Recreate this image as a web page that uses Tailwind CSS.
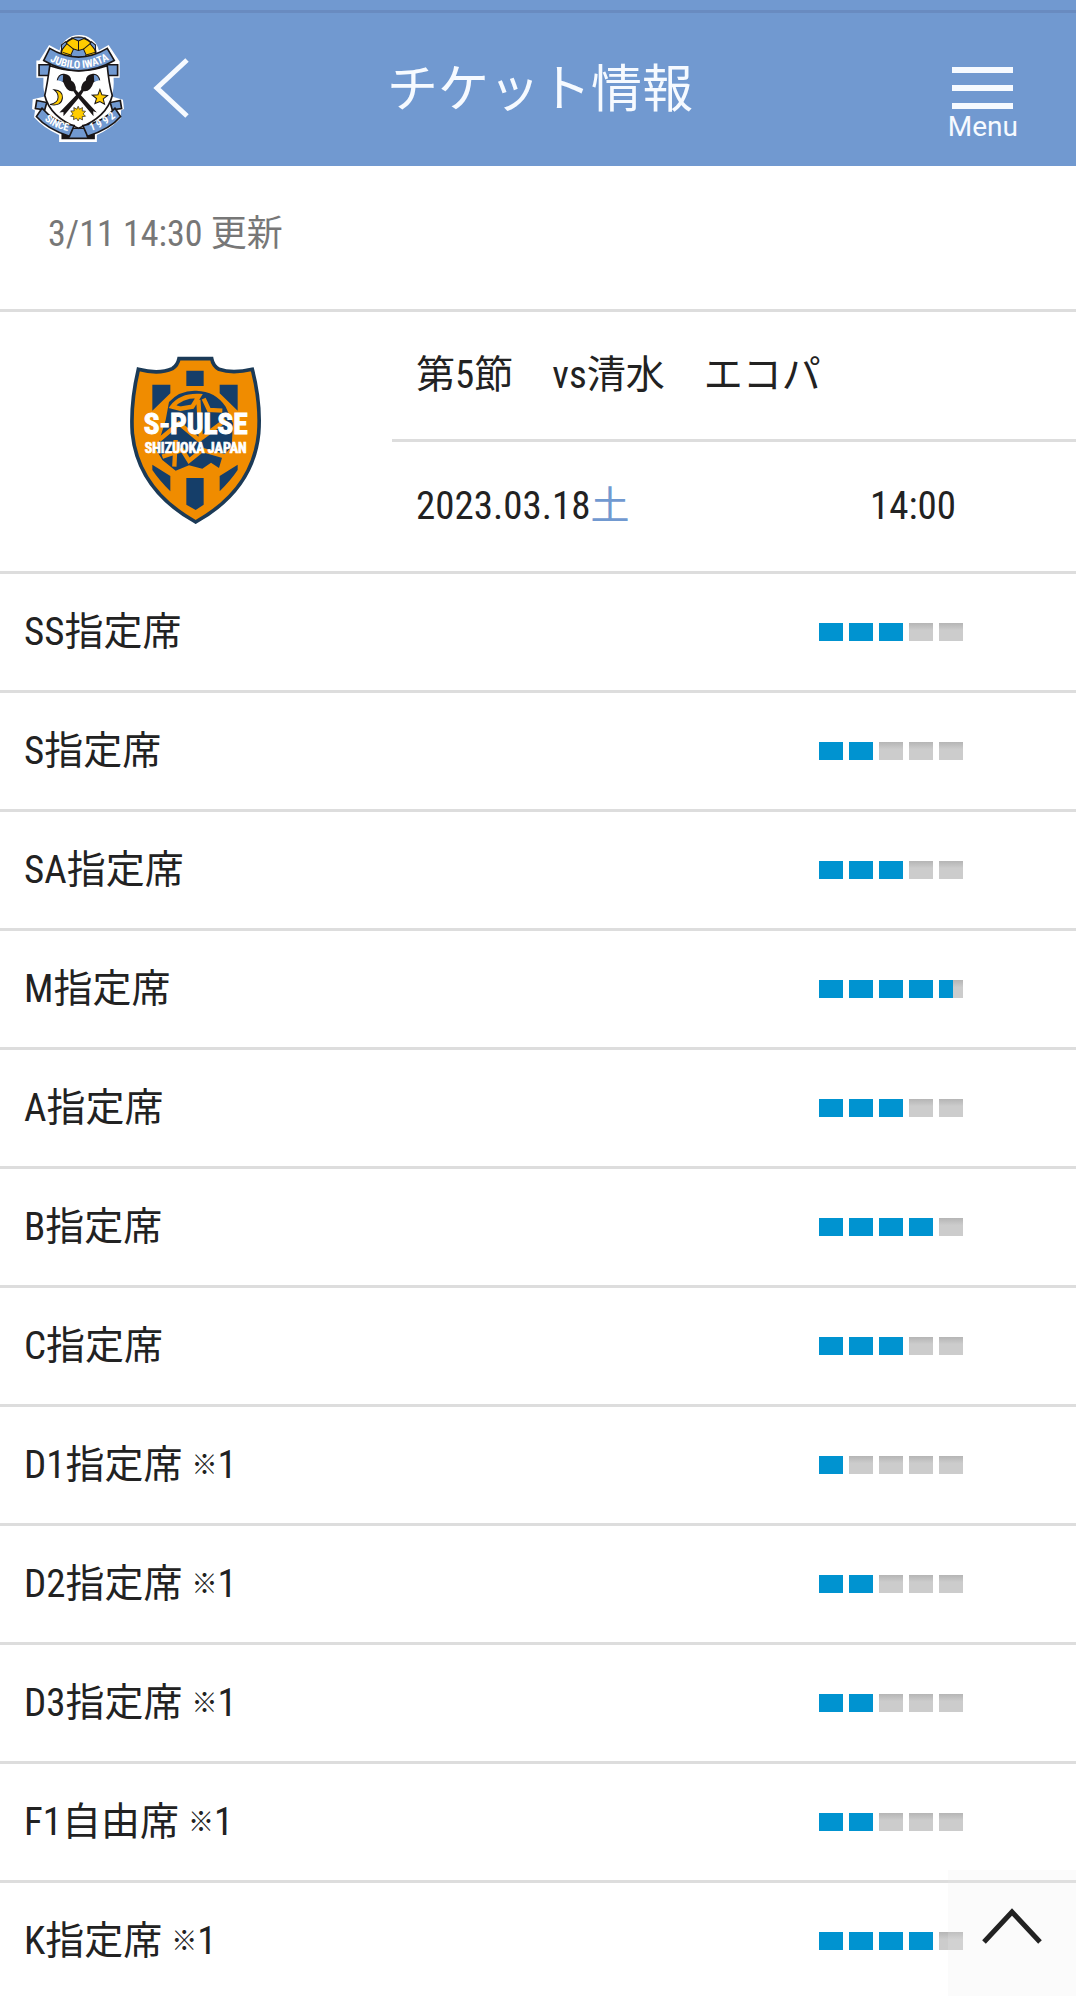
<!DOCTYPE html>
<html lang="ja">
<head>
    <meta charset="UTF-8">
    <meta name="viewport" content="width=device-width, initial-scale=1.0">
    <title>チケット情報</title>
    <script src="https://cdn.jsdelivr.net/npm/@tailwindcss/browser@4"></script>
</head>
<body class="bg-white font-['Roboto_Condensed','Noto_Sans_CJK_JP',sans-serif] text-[39px] text-[#222]">
    <header class="border-t-[10px] border-[#7199d0] bg-[#7199d0] text-[#f6faff]">
        <div class="flex h-[156px] items-center justify-between border-t-[3px] border-[#698bc0] pl-[30px] pr-[26px]">
            <div class="flex w-40 items-center gap-[26px] pb-1">
                <a href="#" aria-label="ホーム" class="shrink-0">
                    <svg class="h-[112px] w-[97px]" viewBox="90 95 290 335">
                        <!-- white outline -->
                        <path d="M178 150 A60 56 0 0 1 296 150 L325 134 L358 183 V232 H340 Q342 265 334 288 L368 298 L371 325 L362 330 L362 352 Q330 385 290 403 V424 H177 V403 Q130 382 102 350 L105 330 L96 325 L98 296 L134 288 Q128 260 130 232 H109 V180 L118 180 L147 134 Z" fill="#fff"/>
                        <!-- ball -->
                        <circle cx="235" cy="163" r="52" fill="#fc0" stroke="#1a1617" stroke-width="5"/>
                        <path d="M220 146 L235 150 L250 146 L258 164 L246 178 H224 L212 164Z M214 112 L235 122 L256 112 M184 150 L200 130 L196 124 L184 134Z M286 150 L270 130 L274 124 L286 134Z" fill="#7199d0" stroke="#1a1617" stroke-width="3"/>
                        <path d="M235 122 L235 150 M200 130 L220 146 M270 130 L250 146 M188 156 L212 164 M258 164 L284 156" stroke="#1a1617" stroke-width="3" fill="none"/>
                        <!-- ribbon tails -->
                        <path d="M117 193 H150 V225 H117Z M320 193 H352 V225 H320Z M110 300 L140 306 L134 328 L106 324Z M360 300 L330 306 L336 328 L364 324Z" fill="#7199d0" stroke="#1a1617" stroke-width="5"/>
                        <path d="M184 398 H284 V416 H184Z" fill="#1a1617"/>
                        <path d="M214 384 H256 L262 412 H206Z" fill="#7199d0" stroke="#1a1617" stroke-width="3"/>
                        <!-- shield -->
                        <path d="M149 196 Q142 250 134 285 Q150 350 235 383 Q320 350 336 285 Q326 250 321 196 Q235 225 149 196Z" fill="#fff" stroke="#1a1617" stroke-width="5"/>
                        <!-- birds -->
                        <path d="M170 240 Q174 218 192 220 Q212 222 213 240 Q228 248 227 268 L238 280 L290 336 L279 332 L280 347 L228 285 L220 272 Q200 276 190 246 Q178 236 170 240Z" fill="#1a1617"/>
                        <path d="M300 240 Q296 218 278 220 Q258 222 257 240 Q242 248 243 268 L232 280 L178 336 L190 334 L190 347 L242 285 L250 272 Q270 276 280 246 Q292 236 300 240Z" fill="#1a1617"/>
                        <path d="M173 239 Q178 223 189 224 L188 244Z M297 239 Q292 223 281 224 L282 244Z" fill="#7199d0"/>
                        <!-- moon, star, sun -->
                        <path d="M162 268 Q188 270 187 292 Q184 318 150 312 Q174 306 174 290 Q174 276 162 268Z" fill="#fc0" stroke="#1a1617" stroke-width="3"/>
                        <path d="M299 267 L305 283 L322 285 L309 295 L313 311 L299 303 L284 309 L289 294 L276 284 L293 283Z" fill="#fc0" stroke="#1a1617" stroke-width="3"/>
                        <path d="M234 317 L238 326 L247 321 L246 331 L256 332 L249 340 L256 347 L246 348 L247 358 L238 353 L234 361 L229 353 L220 357 L221 348 L211 347 L218 340 L212 331 L222 331 L221 321 L230 326Z" fill="#fc0" stroke="#1a1617" stroke-width="2"/>
                        <!-- ribbons -->
                        <path d="M149 144 Q235 196 321 144 L342 180 Q235 242 131 180Z" fill="#7199d0" stroke="#1a1617" stroke-width="5"/>
                        <path d="M126 323 Q162 366 222 375 L208 407 Q140 385 109 348Z M344 323 Q308 366 248 375 L262 407 Q330 385 361 348Z" fill="#7199d0" stroke="#1a1617" stroke-width="5"/>
                        <path id="arcTop" d="M144 179 Q235 230 332 175" fill="none"/>
                        <path id="arcLeft" d="M126 352 Q160 384 212 393" fill="none"/>
                        <path id="arcRight" d="M266 393 Q312 380 352 344" fill="none"/>
                        <g class="font-['Roboto_Condensed',sans-serif] font-bold" fill="#fff" font-size="32">
                            <text><textPath href="#arcTop" startOffset="50%" text-anchor="middle">JUBILO IWATA</textPath></text>
                            <text><textPath href="#arcLeft" startOffset="50%" text-anchor="middle">SINCE</textPath></text>
                            <text><textPath href="#arcRight" startOffset="50%" text-anchor="middle">1 9 9 2</textPath></text>
                        </g>
                    </svg>
                </a>
                <a href="#" aria-label="戻る" class="shrink-0">
                    <svg class="h-[60px] w-9" viewBox="0 0 36 60" fill="none" stroke="#f6faff" stroke-width="5"><path d="M34 2 L4 30 L34 58"/></svg>
                </a>
            </div>
            <h1 class="text-[51px] leading-none">チケット情報</h1>
            <div class="flex w-40 justify-end pr-8">
                <button type="button" class="flex flex-col items-center pt-8 font-[Roboto] text-[28px] leading-9">
                    <svg class="h-[42px] w-[61px]" viewBox="0 0 61 42" fill="#f6faff"><path d="M0 0h61v6H0z M0 18h61v6H0z M0 36h61v6H0z"/></svg>
                    Menu
                </button>
            </div>
        </div>
    </header>

    <main>
        <p class="h-[143px] px-12 pt-9 text-[36px] leading-[64px] text-[#777]">3/11 14:30 更新</p>

        <section class="flex border-y-[3px] border-[#ddd]">
            <div class="flex w-[392px] items-center justify-center pb-1">
                <svg class="h-[168px] w-[134px]" viewBox="60 48 402 504">
                    <path d="M88 88 Q150 104 190 86 Q206 76 210 56 H308 Q312 78 330 88 Q370 102 430 88 Q456 190 449 280 Q432 450 260 546 Q88 450 70 280 Q64 190 88 88Z" fill="#f08c00" stroke="#1b3a57" stroke-width="11"/>
                    <path d="M232 92 H284 V138 H232Z M130 134 H184 V160 L130 212Z M386 134 H332 V160 L386 212Z M130 374 L184 408 V454 Q150 420 130 390Z M386 374 L332 408 V454 Q366 420 386 390Z M232 414 H284 V494 L260 510 L232 494Z" fill="#153e69"/>
                    <!-- globe -->
                    <path d="M180 186 Q212 150 262 152 Q320 154 350 200 L372 250 L368 320 L340 350 L330 384 L306 368 L280 386 L240 376 L200 392 L160 360 L142 330 L170 240Z" fill="#153e69"/>
                    <path d="M190 200 Q216 166 270 168 L250 200 L214 206Z M284 176 L300 210 L340 212 M150 300 L210 250 L270 300 L350 240 M160 350 L220 330 L240 362 L280 330 L350 350 M268 180 L276 300 M200 300 L196 380" fill="none" stroke="#f08c00" stroke-width="13"/>
                    <g class="font-['Roboto_Condensed',sans-serif] font-bold" fill="#fff" text-anchor="middle">
                        <text x="260" y="282" font-size="88" stroke="#fff" stroke-width="3">S-PULSE</text>
                        <text x="260" y="338" font-size="42" stroke="#fff" stroke-width="2">SHIZUOKA JAPAN</text>
                    </g>
                </svg>
            </div>
            <div class="flex-1">
                <h2 class="border-b-[3px] border-[#ddd] px-6 leading-[127px]">第5節　vs清水　エコパ</h2>
                <div class="flex justify-between pl-6 pr-[120px] leading-[129px]">
                    <p>2023.03.18<span class="text-[#7199d0]">土</span></p>
                    <p>14:00</p>
                </div>
            </div>
        </section>

        <table class="w-full border-separate border-spacing-0">
            <tbody id="seats"></tbody>
        </table>
    </main>

    <a href="#" aria-label="ページトップへ" class="fixed bottom-0 right-0 flex h-[126px] w-32 justify-center bg-[#ebebeb]/20 pt-[38px]">
        <svg class="h-9 w-[62px]" viewBox="0 0 62 36" fill="none" stroke="#222" stroke-width="5"><path d="M3 34 L31 4 L59 34"/></svg>
    </a>

    <script>
        const seats = [
            ['SS指定席', 3],
            ['S指定席', 2],
            ['SA指定席', 3],
            ['M指定席', 4.6],
            ['A指定席', 3],
            ['B指定席', 4],
            ['C指定席', 3],
            ['D1指定席', 1, '1'],
            ['D2指定席', 2, '1'],
            ['D3指定席', 2, '1'],
            ['F1自由席', 2, '1'],
            ['K指定席', 4, '1'],
        ];

        document.getElementById('seats').innerHTML = seats.map(([name, level, note]) => {
            let cells = '';
            for (let i = 0; i < 5; i++) {
                const fill = Math.max(0, Math.min(1, level - i)) * 100;
                cells += `<span class="block h-[18px] w-6 bg-linear-to-b from-[#b5b5b5] to-[#ccc] to-40%"><span class="block h-full bg-[#0093d0]" style="width: ${fill}%"></span></span>`;
            }
            const mark = note ? ` <span class="align-[4px] text-[26px] font-bold leading-none">※</span>${note}` : '';
            return `<tr>
                <th scope="row" class="h-[119px] border-b-[3px] border-[#ddd] py-0 pl-6 text-left font-normal leading-none">${name}${mark}</th>
                <td class="border-b-[3px] border-[#ddd] py-0 pr-[113px]"><div class="flex justify-end gap-[6px]" role="img" aria-label="${level} / 5">${cells}</div></td>
            </tr>`;
        }).join('');
    </script>
</body>
</html>
